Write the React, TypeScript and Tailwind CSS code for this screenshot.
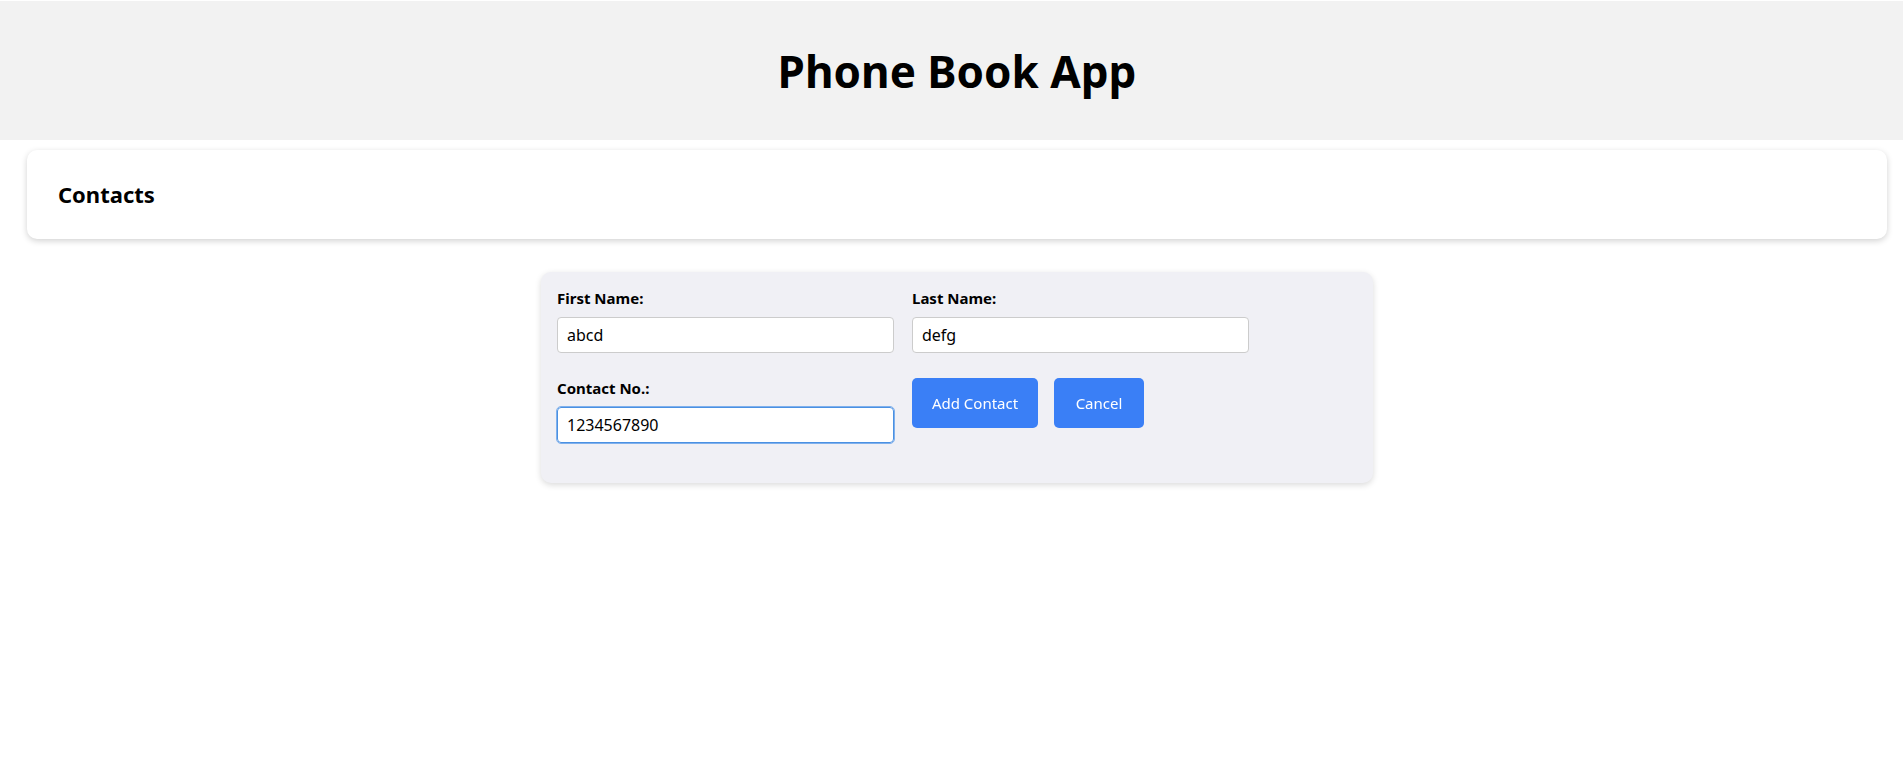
import { useState } from "react";

export default function App() {
  const [first, setFirst] = useState("abcd");
  const [last, setLast] = useState("defg");
  const [phone, setPhone] = useState("1234567890");

  return (
    <div className="min-h-screen bg-white text-black font-['Noto_Sans',sans-serif]">
      {/* header */}
      <header className="mt-px h-[139px] bg-[#f2f2f2] pl-[11px] flex items-center justify-center">
        <h1 className="text-[44px] font-bold leading-none">Phone Book App</h1>
      </header>

      <div className="pl-[11px]">
        {/* contacts bar */}
        <div className="mx-4 mt-[10px] h-[89px] rounded-[10px] bg-white shadow-[0_2px_6px_rgba(0,0,0,0.18)] flex items-center pl-[31px]">
          <h2 className="text-[22px] font-bold">Contacts</h2>
        </div>

        {/* form */}
        <form
          onSubmit={(e) => e.preventDefault()}
          className="mx-auto mt-[33px] w-[832px] rounded-[10px] bg-[#f0f0f5] px-4 pt-4 pb-[16px] shadow-[0_2px_6px_rgba(0,0,0,0.15)]"
        >
          <div className="grid grid-cols-[337px_337px] gap-x-[18px]">
            <div className="mb-[25px]">
              <label className="block text-[15px] font-bold leading-[20px]">First Name:</label>
              <input
                value={first}
                onChange={(e) => setFirst(e.target.value)}
                className="mt-[9px] block h-[36px] w-full rounded-[4px] border border-[#cccccc] bg-white px-[9px] text-[16px] outline-none"
              />
            </div>
            <div className="mb-[25px]">
              <label className="block text-[15px] font-bold leading-[20px]">Last Name:</label>
              <input
                value={last}
                onChange={(e) => setLast(e.target.value)}
                className="mt-[9px] block h-[36px] w-full rounded-[4px] border border-[#cccccc] bg-white px-[9px] text-[16px] outline-none"
              />
            </div>
            <div className="mb-[24px]">
              <label className="block text-[15px] font-bold leading-[20px]">Contact No.:</label>
              <input
                autoFocus
                onFocus={(e) => {
                  const n = e.target.value.length;
                  e.target.setSelectionRange(n, n);
                }}
                value={phone}
                onChange={(e) => setPhone(e.target.value)}
                className="mt-[9px] block h-[36px] w-full rounded-[4px] border border-[#4a90e2] bg-white px-[9px] text-[16px] outline outline-1 outline-[#7fb0ec] caret-black"
              />
            </div>
            <div className="flex items-start gap-4">
              <button className="h-[50px] w-[126px] rounded-[5px] bg-[#3a7ff6] text-[15px] text-white">
                Add Contact
              </button>
              <button type="button" className="h-[50px] w-[90px] rounded-[5px] bg-[#3a7ff6] text-[15px] text-white">
                Cancel
              </button>
            </div>
          </div>
        </form>
      </div>
    </div>
  );
}
